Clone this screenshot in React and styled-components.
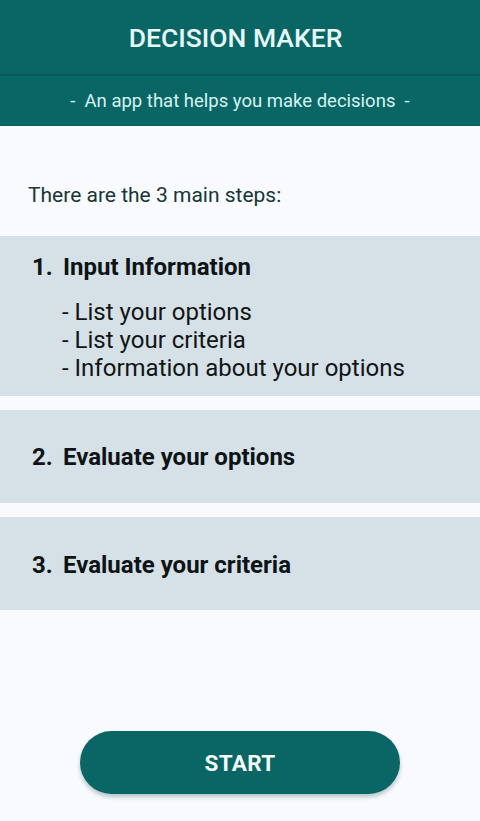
import React from "react";
import styled, { createGlobalStyle } from "styled-components";

const Global = createGlobalStyle`
  html, body { margin: 0; padding: 0; background: #f9fafd; }
  body { font-family: Roboto, "Noto Sans", Arial, sans-serif; }
  #root { min-height: 821px; }
`;

const Page = styled.div`
  width: 480px;
  height: 821px;
  display: flex;
  flex-direction: column;
  background: #f9fafd;
`;

const TitleBar = styled.header`
  height: 74px;
  background: #0a6664;
  border-bottom: 2px solid #075856;
  display: flex;
  align-items: center;
  justify-content: center;
  padding-right: 9px;
`;

const Title = styled.h1`
  margin: 0;
  font-size: 26.5px;
  font-weight: 500;
  color: #e6f9f8;
`;

const SubBar = styled.div`
  height: 49px;
  background: #0a6664;
  border-bottom: 1px solid #08605e;
  display: flex;
  align-items: center;
  justify-content: center;
  color: #d6f3f2;
  font-size: 18.5px;
  white-space: pre;
`;

const Intro = styled.p`
  margin: 55px 0 0 28px;
  font-size: 21px;
  color: #173636;
  line-height: 28px;
  height: 28px;
`;

const Steps = styled.div`
  margin-top: 27px;
  display: flex;
  flex-direction: column;
  gap: 14px;
`;

const StepCard = styled.section`
  background: #d5e1e7;
  height: ${(p) => p.$h}px;
  padding: ${(p) => p.$pt}px 0 0 32px;
  box-sizing: border-box;
`;

const StepTitle = styled.h2`
  margin: 0;
  display: flex;
  font-size: 24px;
  font-weight: 700;
  color: #0e1315;
  line-height: 30px;
`;

const Num = styled.span`
  width: 31px;
`;

const SubList = styled.ul`
  list-style: none;
  margin: 16px 0 0 30px;
  padding: 0;
  font-size: 24px;
  color: #111516;
  line-height: 28px;
`;

const Spacer = styled.div`
  flex: 1;
`;

const StartButton = styled.button`
  align-self: center;
  width: 320px;
  height: 63px;
  margin-bottom: 27px;
  border: none;
  border-radius: 32px;
  background: #0a6664;
  color: #f4fbfb;
  font-family: Roboto, Arial, sans-serif;
  font-size: 22.5px;
  font-weight: 700;
  letter-spacing: 0.3px;
  box-shadow: 0 3px 4px rgba(0, 60, 60, 0.28);
`;

export default function App() {
  return (
    <>
      <Global />
      <Page>
        <TitleBar>
          <Title>DECISION MAKER</Title>
        </TitleBar>
        <SubBar>{"-  An app that helps you make decisions  -"}</SubBar>
        <Intro>There are the 3 main steps:</Intro>
        <Steps>
          <StepCard $h={160} $pt={16}>
            <StepTitle>
              <Num>1.</Num>Input Information
            </StepTitle>
            <SubList>
              <li>- List your options</li>
              <li>- List your criteria</li>
              <li>- Information about your options</li>
            </SubList>
          </StepCard>
          <StepCard $h={93} $pt={32}>
            <StepTitle>
              <Num>2.</Num>Evaluate your options
            </StepTitle>
          </StepCard>
          <StepCard $h={93} $pt={33}>
            <StepTitle>
              <Num>3.</Num>Evaluate your criteria
            </StepTitle>
          </StepCard>
        </Steps>
        <Spacer />
        <StartButton>START</StartButton>
      </Page>
    </>
  );
}
